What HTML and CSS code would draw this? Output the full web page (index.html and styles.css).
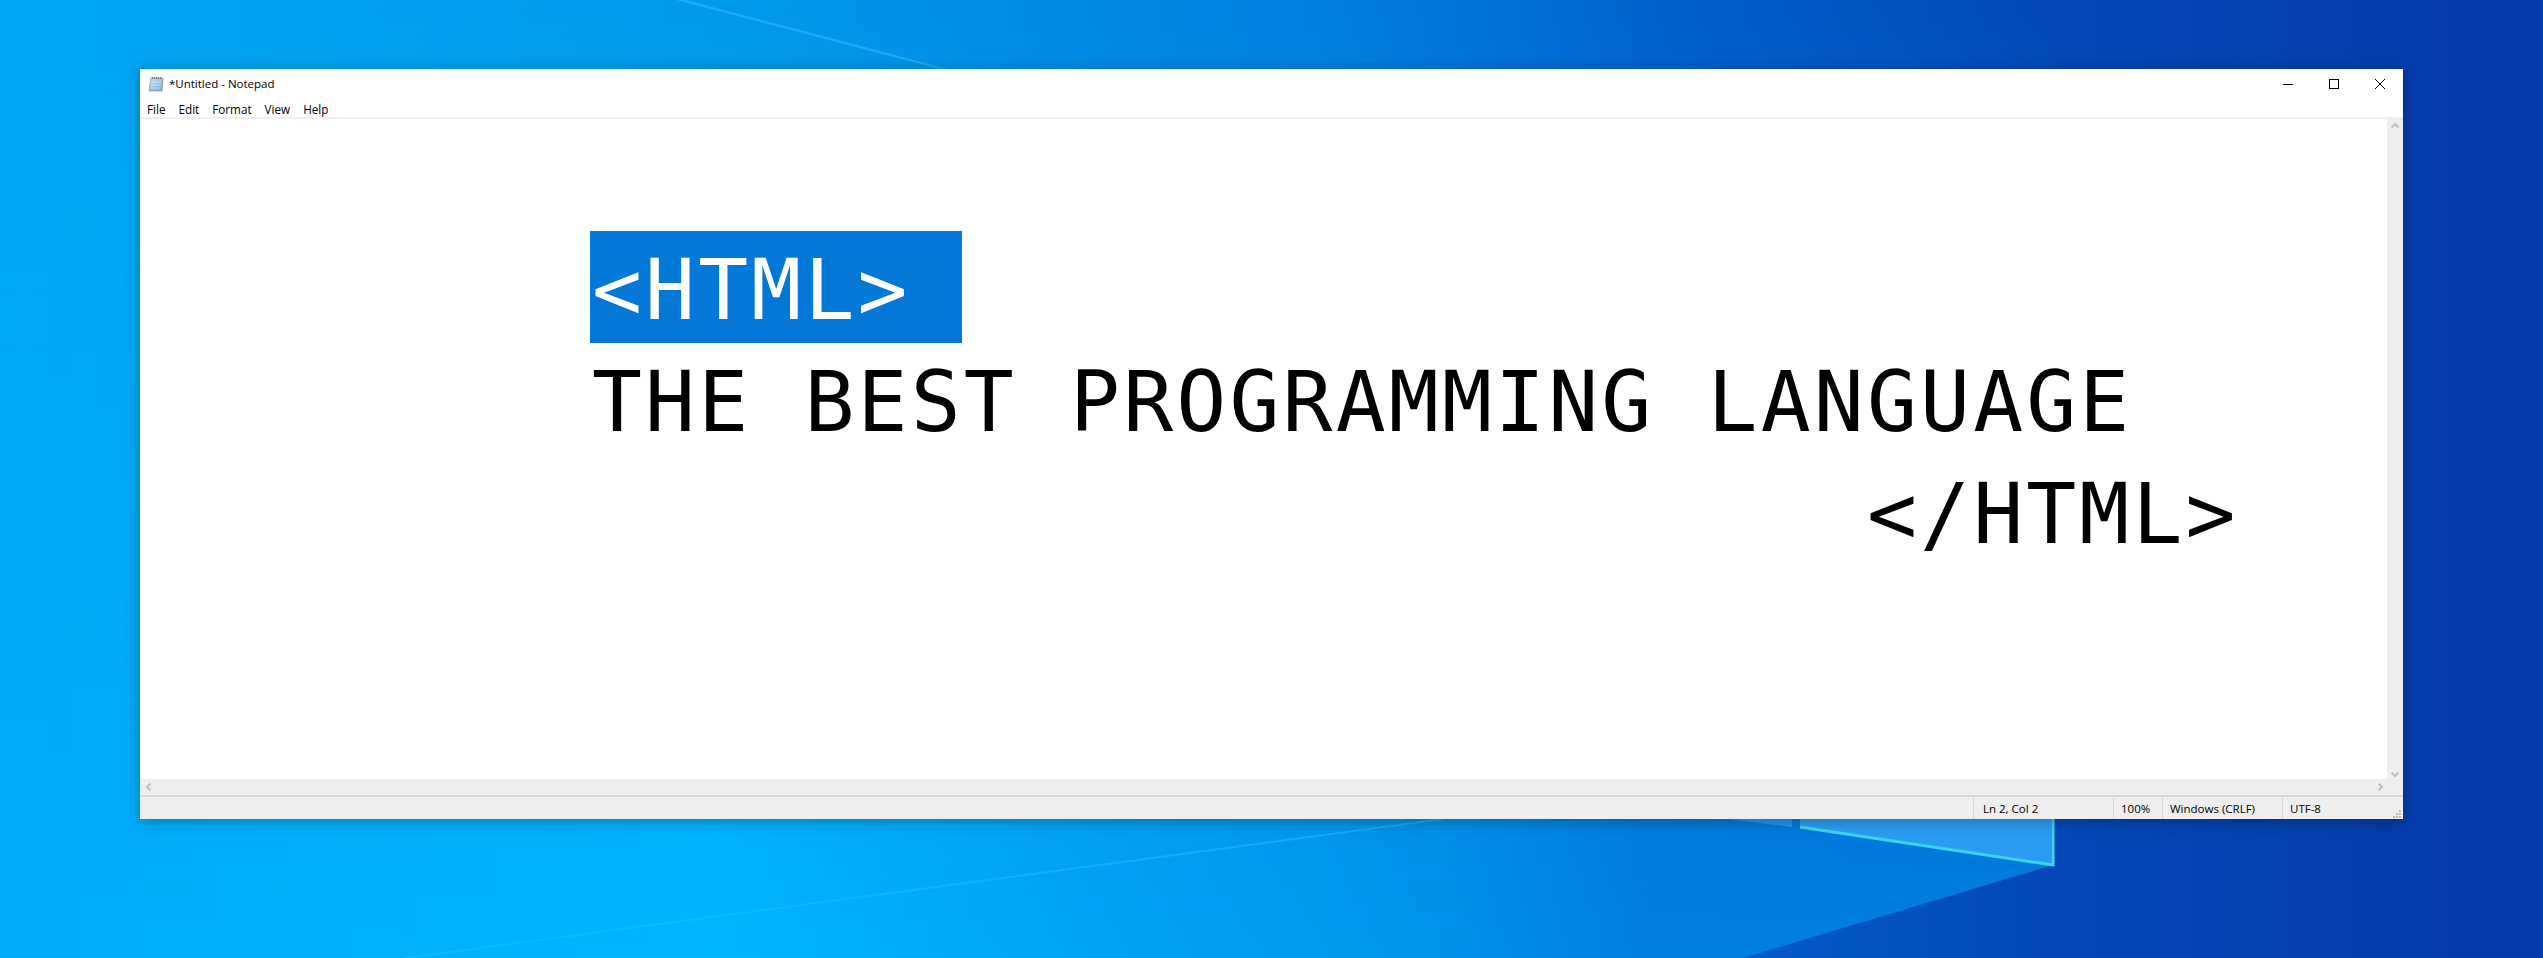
FILE: index.html
```html
<!DOCTYPE html>
<html lang="en">
<head>
    <meta charset="UTF-8">
    <meta name="viewport" content="width=device-width, initial-scale=1.0">
    <title>Untitled - Notepad</title>
    <link rel="stylesheet" href="styles.css">
</head>
<body>
    <svg class="wallpaper" viewBox="0 0 2543 958" preserveAspectRatio="none">
        <defs>
            <linearGradient id="wall" x1="0" y1="0" x2="1" y2="0">
                <stop offset="0" stop-color="#00a8f6"/>
                <stop offset="0.3" stop-color="#0098ea"/>
                <stop offset="0.52" stop-color="#0080e0"/>
                <stop offset="0.65" stop-color="#0062ce"/>
                <stop offset="0.8" stop-color="#0448b8"/>
                <stop offset="1" stop-color="#0338a8"/>
            </linearGradient>
            <linearGradient id="floor" x1="0" y1="0" x2="1" y2="0">
                <stop offset="0" stop-color="#00acf8"/>
                <stop offset="0.35" stop-color="#00b6ff"/>
                <stop offset="0.55" stop-color="#00a2f5"/>
                <stop offset="0.7" stop-color="#0094ec"/>
                <stop offset="0.8" stop-color="#0080e0"/>
            </linearGradient>
            <linearGradient id="fade" x1="0" y1="0" x2="0" y2="1">
                <stop offset="0" stop-color="#fff" stop-opacity="0"/>
                <stop offset="1" stop-color="#fff"/>
            </linearGradient>
            <mask id="floor_mask">
                <rect width="2543" height="958" fill="url(#fade)"/>
            </mask>
        </defs>
        <rect width="2543" height="958" fill="url(#wall)"/>
        <polygon points="0,0 2053,0 2053,865 1743,958 0,958" fill="url(#floor)" mask="url(#floor_mask)"/>
        <polygon points="686,0 948,69 940,69 676,0" fill="#2ab4fa" opacity="0.7"/>
        <line x1="1443" y1="819" x2="405" y2="958" stroke="#20c0ff" stroke-width="2" opacity="0.5"/>
        <polygon points="1800,819 2051,819 2051,865 1800,827" fill="#2a9cf2"/>
        <polygon points="1727,819 1792,819 1792,827" fill="#2a9cf2" opacity="0.8"/>
        <polyline points="1800,827 2053,865 2053,819" fill="none" stroke="#3cd4f0" stroke-width="3"/>
    </svg>

    <div class="window">
        <div class="title_bar">
            <svg class="app_icon" viewBox="0 0 16 16">
                <defs>
                    <linearGradient id="page" x1="0" y1="0" x2="1" y2="1">
                        <stop offset="0" stop-color="#c8e6f6"/>
                        <stop offset="1" stop-color="#6aa6d0"/>
                    </linearGradient>
                </defs>
                <polygon points="3,2 15,2 14,15 1,15" fill="url(#page)" stroke="#8a9490" stroke-width="0.7"/>
                <path d="M3 6h10M3 9h10M2.500 12h10" stroke="#e6f4fa" stroke-width="0.7"/>
                <path d="M4.500 1v2M6.500 1v2M8.500 1v2M10.500 1v2M12.500 1v2" stroke="#666" stroke-width="0.8"/>
            </svg>
            <span class="title_text">*Untitled - Notepad</span>
            <div class="caption_buttons">
                <svg class="caption_icon" viewBox="0 0 12 12"><path d="M1 6.500h10" stroke="#000"/></svg>
                <svg class="caption_icon" viewBox="0 0 12 12"><rect x="1.500" y="1.500" width="9" height="9" fill="none" stroke="#000"/></svg>
                <svg class="caption_icon" viewBox="0 0 12 12"><path d="M1 1l10 10M11 1L1 11" stroke="#000"/></svg>
            </div>
        </div>
        <div class="menu_bar">
            <span>File</span>
            <span>Edit</span>
            <span>Format</span>
            <span>View</span>
            <span>Help</span>
        </div>
        <div class="editor_row">
            <div class="editor">
                <div class="line"><span class="selected">&lt;HTML&gt;</span></div>
                <div class="line text_line">THE BEST PROGRAMMING LANGUAGE</div>
                <div class="line text_line">                        &lt;/HTML&gt;</div>
            </div>
            <div class="scroll_v">
                <svg class="arrow" viewBox="0 0 10 10"><path d="M1.500 6.500L5 3l3.500 3.500" fill="none" stroke="#c0c0c0" stroke-width="2"/></svg>
                <svg class="arrow" viewBox="0 0 10 10"><path d="M1.500 3.500L5 7l3.500-3.500" fill="none" stroke="#c0c0c0" stroke-width="2"/></svg>
            </div>
        </div>
        <div class="scroll_h">
            <svg class="arrow" viewBox="0 0 10 10"><path d="M6.500 1.500L3 5l3.500 3.500" fill="none" stroke="#c0c0c0" stroke-width="2"/></svg>
            <svg class="arrow" viewBox="0 0 10 10"><path d="M3.500 1.500L7 5l-3.500 3.500" fill="none" stroke="#c0c0c0" stroke-width="2"/></svg>
        </div>
        <div class="status_bar">
            <div class="status_cell cell_pos">Ln 2, Col 2</div>
            <div class="status_cell cell_zoom">100%</div>
            <div class="status_cell cell_eol">Windows (CRLF)</div>
            <div class="status_cell cell_enc">UTF-8</div>
            <svg class="grip" viewBox="0 0 10 10">
                <path d="M7 1h2v2H7zM4 4h2v2H4zM7 4h2v2H7zM1 7h2v2H1zM4 7h2v2H4zM7 7h2v2H7z" fill="#b8b8b8"/>
            </svg>
        </div>
    </div>
</body>
</html>
```

FILE: styles.css
```css
html, body {
    margin: 0;
    padding: 0;
    height: 958px;
    overflow: hidden;
}

body {
    font-family: "Open Sans", "Noto Sans", sans-serif;
    padding: 69px 140px 0;
    box-sizing: border-box;
}

/* the desktop picture sits behind the window */
.wallpaper {
    position: absolute;
    left: 0;
    top: 0;
    width: 2543px;
    height: 958px;
}

.window {
    position: relative;
    width: 2263px;
    height: 750px;
    background-color: #fff;
    display: flex;
    flex-direction: column;
    box-shadow: 0 2px 14px rgba(0, 0, 0, 0.3);
}

.title_bar {
    height: 29px;
    padding-bottom: 2px;
    display: flex;
    align-items: center;
    padding-left: 8px;
    font-size: 11.5px;
}

.app_icon {
    width: 16px;
    height: 16px;
    margin-right: 5px;
}

.title_text {
    color: #000;
}

.caption_buttons {
    margin-left: auto;
    display: flex;
    gap: 34px;
    padding-right: 17px;
}

.caption_icon {
    width: 12px;
    height: 12px;
}

.menu_bar {
    height: 17px;
    display: flex;
    gap: 13px;
    padding-left: 7px;
    font-size: 11.7px;
    line-height: 18px;
    border-bottom: 2px solid #f0f0f0;
}

.editor_row {
    flex: 1;
    display: flex;
    min-height: 0;
}

.editor {
    flex: 1;
    padding: 112px 0 0 450px;
    font-family: "DejaVu Sans Mono", monospace;
    font-size: 83px;
    letter-spacing: 3.15px;
    color: #000;
}

.line {
    height: 112px;
    line-height: 119px;
    white-space: pre;
}

.text_line {
    padding-left: 2px;
}

.selected {
    display: inline-block;
    width: 372px;
    height: 112px;
    padding-left: 2px;
    box-sizing: border-box;
    background-color: #0378d7;
    color: #fff;
}

.scroll_v {
    width: 16px;
    background-color: #eee;
    display: flex;
    flex-direction: column;
    justify-content: space-between;
    align-items: center;
    padding-top: 2px;
}

.scroll_h {
    height: 16px;
    background-color: #eee;
    display: flex;
    justify-content: space-between;
    align-items: center;
    padding: 0 18px 0 4px;
}

.arrow {
    width: 10px;
    height: 10px;
}

.status_bar {
    position: relative;
    height: 22px;
    background-color: #eee;
    border-top: 2px solid #d6d6d6;
    display: flex;
    justify-content: flex-end;
    font-size: 11.5px;
    line-height: 21px;
    color: #000;
}

.status_cell {
    border-left: 1px solid #d6d6d6;
    padding-left: 9px;
    margin-top: 1px;
    box-sizing: border-box;
}

.cell_pos { width: 140px; }
.cell_zoom { width: 49px; padding-left: 7px; }
.cell_eol { width: 120px; padding-left: 7px; }
.cell_enc { width: 121px; padding-left: 7px; }

.grip {
    position: absolute;
    right: 1px;
    bottom: 0;
    width: 10px;
    height: 10px;
}
```
